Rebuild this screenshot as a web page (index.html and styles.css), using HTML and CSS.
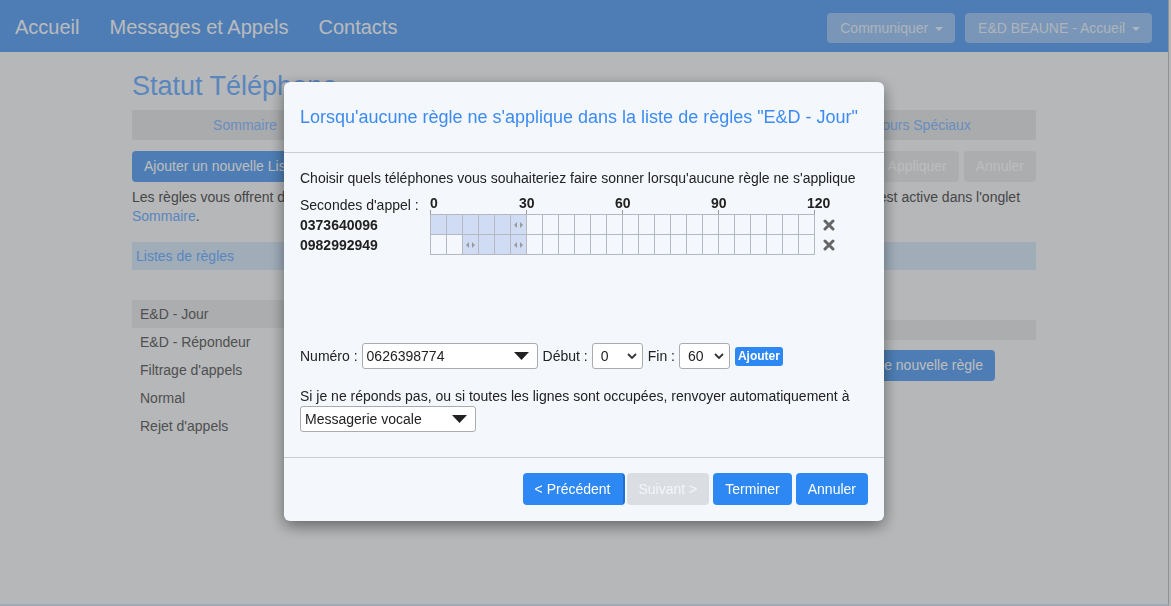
FILE: index.html
```html
<!DOCTYPE html>
<html lang="fr">
<head>
    <meta charset="UTF-8">
    <meta name="viewport" content="width=device-width, initial-scale=1.0">
    <title>Statut Téléphone</title>
    <link rel="stylesheet" href="styles.css">
</head>
<body>
    <nav class="navbar">
        <div class="nav-links">
            <a href="#">Accueil</a>
            <a href="#">Messages et Appels</a>
            <a href="#">Contacts</a>
        </div>
        <div class="nav-right">
            <button class="nav-btn">Communiquer <span class="caret"></span></button>
            <button class="nav-btn">E&amp;D BEAUNE - Accueil <span class="caret"></span></button>
        </div>
    </nav>

    <main class="container">
        <h1>Statut Téléphone</h1>

        <ul class="tabs">
            <li>Sommaire</li>
            <li>Listes de règles</li>
            <li>Horaires</li>
            <li>Jours Spéciaux</li>
        </ul>

        <div class="toolbar">
            <button class="btn btn-primary">Ajouter un nouvelle Liste de règles</button>
            <div class="toolbar-right">
                <button class="btn btn-muted">Appliquer</button>
                <button class="btn btn-muted">Annuler</button>
            </div>
        </div>

        <p class="intro">Les règles vous offrent de nombreuses possibilités pour gérer et trier tous vos appels entrants. Une seule liste de règles est active dans l'onglet<br><a href="#">Sommaire</a>.</p>

        <div class="panel-heading">Listes de règles</div>

        <div class="rules-layout">
            <ul class="rule-lists">
                <li class="active">E&amp;D - Jour</li>
                <li>E&amp;D - Répondeur</li>
                <li>Filtrage d'appels</li>
                <li>Normal</li>
                <li>Rejet d'appels</li>
            </ul>
            <div class="rules-detail">
                <div class="detail-head"></div>
                <div class="detail-actions">
                    <button class="btn btn-primary">Ajouter une nouvelle règle</button>
                </div>
            </div>
        </div>
    </main>

    <div class="backdrop">
        <div class="modal">
            <div class="modal-header">
                <h4>Lorsqu'aucune règle ne s'applique dans la liste de règles "E&amp;D - Jour"</h4>
            </div>

            <div class="modal-body">
                <p class="lead-text">Choisir quels téléphones vous souhaiteriez faire sonner lorsqu'aucune règle ne s'applique</p>

                <div class="timeline">
                    <div class="tl-row tl-head">
                        <span class="tl-label">Secondes d'appel :</span>
                        <div class="ruler">
                            <span class="tick first" style="left: 0%">0</span>
                            <span class="tick" style="left: 25%">30</span>
                            <span class="tick" style="left: 50%">60</span>
                            <span class="tick" style="left: 75%">90</span>
                            <span class="tick" style="left: 100%">120</span>
                        </div>
                    </div>

                    <div class="tl-row">
                        <span class="tl-label phone">0373640096</span>
                        <div class="track" data-start="0" data-end="30"></div>
                        <span class="remove"><svg width="12" height="12" viewBox="0 0 12 12"><path d="M2 2 L10 10 M10 2 L2 10" stroke="#666" stroke-width="3" stroke-linecap="round"/></svg></span>
                    </div>

                    <div class="tl-row">
                        <span class="tl-label phone">0982992949</span>
                        <div class="track" data-start="10" data-end="30"></div>
                        <span class="remove"><svg width="12" height="12" viewBox="0 0 12 12"><path d="M2 2 L10 10 M10 2 L2 10" stroke="#666" stroke-width="3" stroke-linecap="round"/></svg></span>
                    </div>
                </div>

                <div class="add-row">
                    <span>Numéro :</span>
                    <span class="select select-wide">
                        <select><option>0626398774</option></select>
                        <svg class="arrow-solid" width="15" height="8" viewBox="0 0 15 8"><polygon points="0,0 15,0 7.5,8" fill="#222"/></svg>
                    </span>
                    <span class="field-label">Début :</span>
                    <span class="select select-small">
                        <select><option>0</option></select>
                        <svg class="arrow-chevron" width="10" height="6" viewBox="0 0 10 6"><polyline points="1,1 5,5 9,1" fill="none" stroke="#333" stroke-width="1.8"/></svg>
                    </span>
                    <span class="field-label">Fin :</span>
                    <span class="select select-small">
                        <select><option>60</option></select>
                        <svg class="arrow-chevron" width="10" height="6" viewBox="0 0 10 6"><polyline points="1,1 5,5 9,1" fill="none" stroke="#333" stroke-width="1.8"/></svg>
                    </span>
                    <button class="btn-xs">Ajouter</button>
                </div>

                <p class="forward-text">Si je ne réponds pas, ou si toutes les lignes sont occupées, renvoyer automatiquement à</p>
                <span class="select select-wide">
                    <select><option>Messagerie vocale</option></select>
                    <svg class="arrow-solid" width="15" height="8" viewBox="0 0 15 8"><polygon points="0,0 15,0 7.5,8" fill="#222"/></svg>
                </span>
            </div>

            <div class="modal-footer">
                <button class="btn btn-blue btn-prev">&lt; Précédent</button>
                <button class="btn btn-disabled">Suivant &gt;</button>
                <button class="btn btn-blue">Terminer</button>
                <button class="btn btn-blue">Annuler</button>
            </div>
        </div>
    </div>

    <script>
        // build the 5-second cells of each ring track
        document.querySelectorAll('.track').forEach(function (track) {
            var start = +track.dataset.start;
            var end = +track.dataset.end;
            for (var s = 0; s < 120; s += 5) {
                var cell = document.createElement('div');
                cell.className = 'cell';
                if (s >= start && s < end) cell.classList.add('on');
                if (s === start && start > 0 || s === end - 5) {
                    cell.innerHTML = '<svg width="9" height="6" viewBox="0 0 9 6"><polygon points="0,3 3,0 3,6" fill="#999"/><polygon points="6,0 9,3 6,6" fill="#999"/></svg>';
                }
                track.appendChild(cell);
            }
        });
    </script>
</body>
</html>
```

FILE: styles.css
```css
html {
    height: 100%;
}

body {
    font-family: "Liberation Sans", Arial, sans-serif;
    font-size: 14px;
    background-color: #f5f7fa;
    color: #606060;
    margin: 0 2px 0 0;
    border-right: 1px solid #c4c4c4;
    min-height: 100%;
    box-sizing: border-box;
    border-bottom: 2px solid #d6e4f2;
}

button {
    font-family: inherit;
}

/* Navbar */
.navbar {
    display: flex;
    align-items: center;
    justify-content: space-between;
    height: 52px;
    padding-top: 3px;
    box-sizing: border-box;
    background-color: #68a9f3;
}

.nav-links {
    display: flex;
}

.nav-links a {
    color: #fafbff;
    text-decoration: none;
    font-size: 20px;
    padding: 0 15px;
}

.nav-right {
    display: flex;
    gap: 10px;
    padding-right: 16px;
}

.nav-btn {
    background-color: rgba(255, 255, 255, 0.4);
    color: rgba(255, 255, 255, 0.78);
    border: none;
    border-radius: 4px;
    height: 30px;
    padding: 0 12px 0 13px;
    font-size: 14px;
}

.caret {
    display: inline-block;
    width: 0;
    height: 0;
    margin-left: 3px;
    vertical-align: middle;
    border-top: 4px solid rgba(255, 255, 255, 0.8);
    border-left: 4px solid transparent;
    border-right: 4px solid transparent;
}

/* Page */
.container {
    width: 904px;
    margin: 0 auto;
}

h1 {
    font-size: 27px;
    font-weight: normal;
    line-height: 32px;
    color: #7ab5ff;
    margin: 18px 0 8px;
}

.tabs {
    display: flex;
    list-style: none;
    margin: 0;
    padding: 0;
    background-color: #e5e7ea;
    border-radius: 2px;
}

.tabs li {
    flex: 1;
    text-align: center;
    line-height: 30px;
    color: #8ec0ff;
}

.toolbar {
    display: flex;
    justify-content: space-between;
    margin-top: 11px;
}

.toolbar-right {
    display: flex;
    gap: 5px;
}

.btn {
    border: none;
    border-radius: 4px;
    font-size: 14px;
    line-height: 19px;
    padding: 6px 12px;
    cursor: pointer;
}

.btn-primary {
    background-color: #68a9f3;
    color: #fff;
}

.btn-muted {
    background-color: #e8eaec;
    color: #fff;
}

.intro {
    line-height: 19px;
    margin: 6px 0 0;
}

.intro a {
    color: #7ab5ff;
    text-decoration: none;
}

.panel-heading {
    margin-top: 16px;
    background-color: #d8eafa;
    color: #7ab5ff;
    line-height: 28px;
    padding-left: 4px;
}

.rules-layout {
    display: flex;
    gap: 12px;
    margin-top: 30px;
}

.rule-lists {
    list-style: none;
    margin: 0;
    padding: 0;
    width: 226px;
}

.rule-lists li {
    line-height: 28px;
    padding-left: 8px;
    color: #6c6c6c;
}

.rule-lists li.active {
    background-color: #e8eaed;
}

.rules-detail {
    flex: 1;
    padding-top: 20px;
}

.detail-head {
    height: 20px;
    background-color: #e8eaed;
}

.detail-actions {
    display: flex;
    justify-content: flex-end;
    margin: 10px 41px 0 0;
}

/* Modal */
.backdrop {
    position: fixed;
    inset: 0;
    background-color: rgba(0, 0, 0, 0.26);
    display: flex;
    justify-content: center;
    align-items: flex-start;
    padding: 82px 3px 0 0;
}

.modal {
    width: 600px;
    background-color: #f4f7fb;
    border-radius: 6px;
    box-shadow: 0 5px 15px rgba(0, 0, 0, 0.45);
    color: #222;
}

.modal-header {
    padding: 24px 16px;
    border-bottom: 1px solid #c9ccd1;
}

.modal-header h4 {
    margin: 0;
    font-size: 18px;
    font-weight: normal;
    line-height: 22px;
    color: #3d8bf2;
}

.modal-body {
    padding: 16px 16px 25px;
}

.lead-text {
    margin: 0 0 7px;
    line-height: 18px;
}

.timeline {
    height: 149px;
}

.tl-row {
    display: flex;
    align-items: center;
}

.tl-label {
    width: 130px;
    flex-shrink: 0;
}

.tl-head {
    height: 20px;
}

.tl-head .tl-label {
    padding-top: 1px;
}

.phone {
    font-weight: bold;
    color: #222;
}

.ruler {
    position: relative;
    width: 384px;
    height: 20px;
}

.tick {
    position: absolute;
    top: 2px;
    font-weight: bold;
    line-height: 15px;
    transform: translateX(-7px);
}

.tick::after {
    content: "";
    position: absolute;
    left: 7px;
    top: 14px;
    width: 1px;
    height: 4px;
    background-color: #999;
}

.tick.first {
    transform: none;
}

.tick.first::after {
    left: 0;
}

.track {
    display: flex;
    border-left: 1px solid #b5b9c1;
}

.tl-row:nth-child(2) .track {
    border-top: 1px solid #b5b9c1;
}

.cell {
    width: 15px;
    height: 19px;
    border-right: 1px solid #b5b9c1;
    border-bottom: 1px solid #b5b9c1;
    display: flex;
    align-items: center;
    justify-content: center;
}

.cell.on {
    background-color: #d0dcf4;
}

.remove {
    display: flex;
    margin-left: 8px;
}

.add-row {
    display: flex;
    align-items: center;
    gap: 4px;
}

.field-label {
    margin-left: 1px;
}

.select {
    position: relative;
    display: inline-block;
}

.select select {
    appearance: none;
    font-family: inherit;
    font-size: 14px;
    color: #222;
    height: 26px;
    border: 1px solid #a9abae;
    border-radius: 3px;
    background-color: #fff;
    padding: 0 4px;
}

.select-wide select {
    width: 176px;
}

.select-small select {
    width: 51px;
    padding-left: 8px;
}

.arrow-solid {
    position: absolute;
    right: 9px;
    top: 9px;
    pointer-events: none;
}

.arrow-chevron {
    position: absolute;
    right: 6px;
    top: 10px;
    pointer-events: none;
}

.btn-xs {
    background-color: #2d88f3;
    color: #fff;
    border: none;
    border-radius: 3px;
    font-size: 12px;
    font-weight: bold;
    height: 19px;
    padding: 0 3px;
    margin-left: 1px;
}

.forward-text {
    margin: 18px 0 1px;
    line-height: 18px;
}

.modal-footer {
    display: flex;
    justify-content: flex-end;
    gap: 4px;
    padding: 15px 16px 16px;
    border-top: 1px solid #c9ccd1;
}

.btn-blue {
    background-color: #2d88f3;
    color: #fff;
    line-height: 20px;
}

.btn-prev {
    margin-right: -2px;
    border-right: 2px solid #1f6fd0;
}

.btn-disabled {
    background-color: #dadde1;
    color: #f5f6f8;
    line-height: 20px;
}
```
